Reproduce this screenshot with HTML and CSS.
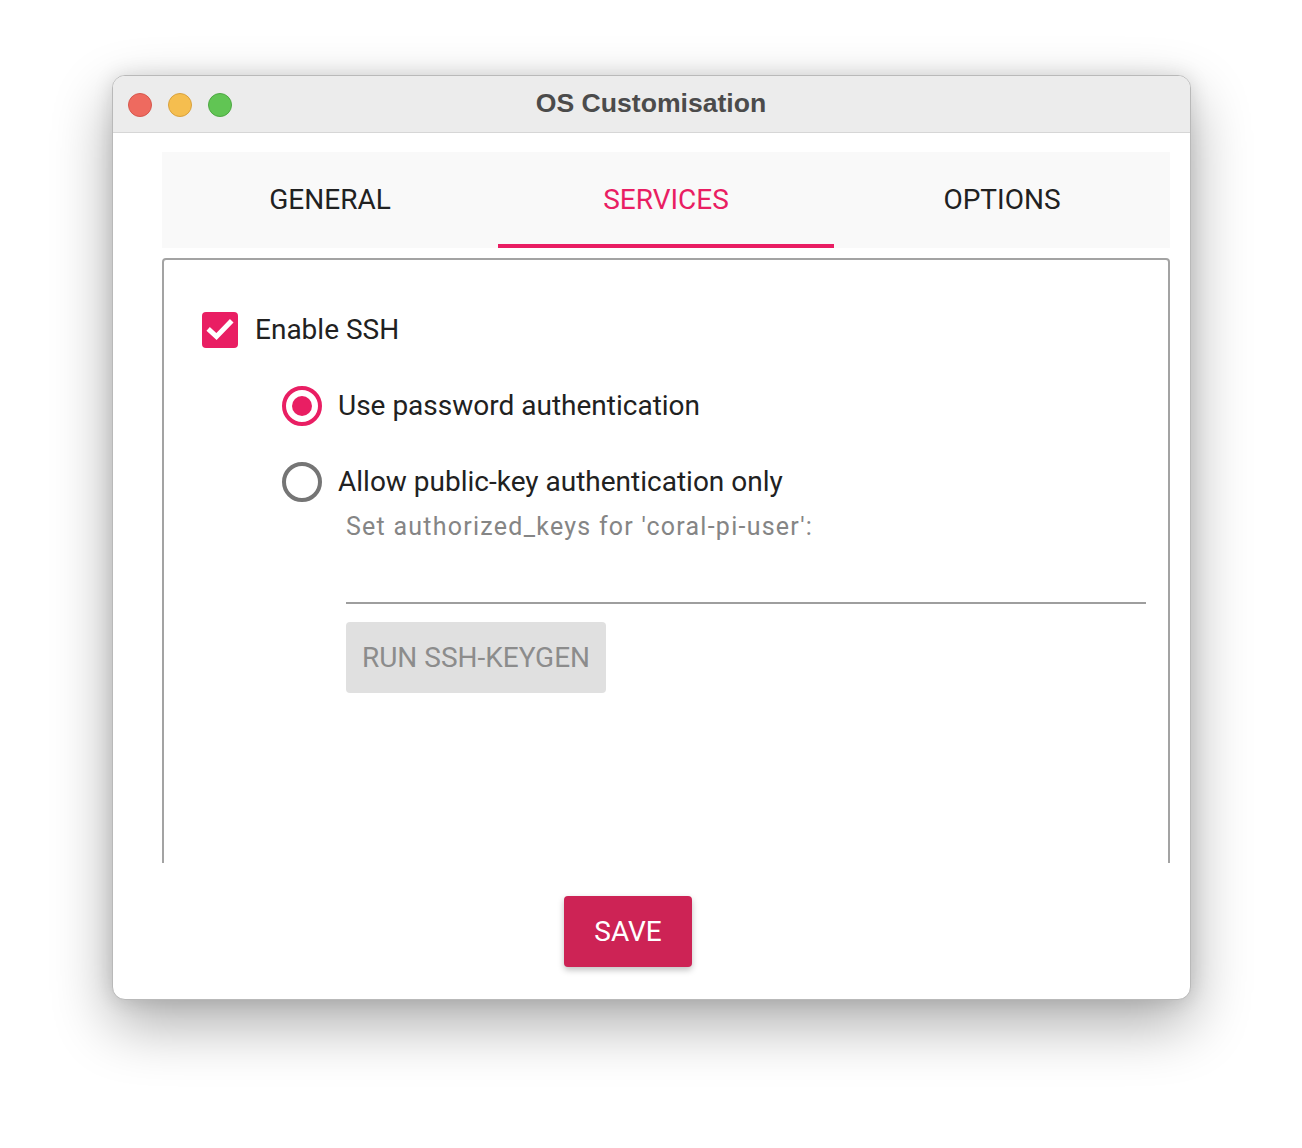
FILE: index.html
```html
<!DOCTYPE html>
<html>
<head>
<meta charset="utf-8">
<link rel="stylesheet" href="styles.css">
</head>
<body>
<div class="stage">
  <div class="window">
    <div class="titlebar">
      <div class="lights">
        <span class="light red"></span>
        <span class="light yellow"></span>
        <span class="light green"></span>
      </div>
      <div class="title">OS Customisation</div>
    </div>
    <div class="content">
      <div class="tabs">
        <div class="tab">GENERAL</div>
        <div class="tab active">SERVICES</div>
        <div class="tab">OPTIONS</div>
      </div>
      <div class="frame-clip">
        <div class="frame">
          <div class="check-row">
            <span class="checkbox">
              <svg width="36" height="36" viewBox="0 0 36 36"><path d="M8 18.5 L14.5 24.5 L28 10.5" fill="none" stroke="#fff" stroke-width="5" stroke-linecap="square"/></svg>
            </span>
            <span class="label">Enable SSH</span>
          </div>
          <div class="radios">
            <div class="radio-row first">
              <span class="radio checked"><span class="dot"></span></span>
              <span class="label">Use password authentication</span>
            </div>
            <div class="radio-row second">
              <span class="radio"></span>
              <span class="label">Allow public-key authentication only</span>
            </div>
            <div class="keys">
              <div class="hint">Set authorized_keys for 'coral-pi-user':</div>
              <div class="field"></div>
              <div class="keygen">RUN SSH-KEYGEN</div>
            </div>
          </div>
        </div>
      </div>
      <div class="actions">
        <div class="save">SAVE</div>
      </div>
    </div>
  </div>
</div>
</body>
</html>
```

FILE: styles.css
```css
html, body {
  margin: 0;
  padding: 0;
  background: #ffffff;
}

.stage {
  width: 1302px;
  height: 1148px;
  padding: 75px 0 0 112px;
  box-sizing: border-box;
}

.window {
  width: 1079px;
  height: 925px;
  box-sizing: border-box;
  background: #ffffff;
  border: 1px solid #b9b9b9;
  border-radius: 13px;
  overflow: hidden;
  box-shadow: 0 24px 60px rgba(0, 0, 0, 0.33), 0 0 20px rgba(0, 0, 0, 0.12);
  display: flex;
  flex-direction: column;
}

.titlebar {
  height: 56px;
  flex: none;
  background: #ececec;
  border-bottom: 1px solid #d6d6d6;
  display: flex;
  align-items: center;
  position: relative;
}

.lights {
  display: flex;
  gap: 16px;
  padding-left: 15px;
  padding-top: 2px;
}

.light {
  width: 24px;
  height: 24px;
  border-radius: 50%;
  box-sizing: border-box;
}

.light.red { background: #ee6a5f; border: 1px solid #d6574d; }
.light.yellow { background: #f5be4f; border: 1px solid #d9a23e; }
.light.green { background: #61c554; border: 1px solid #4ea843; }

.title {
  position: absolute;
  left: 0;
  right: 0;
  top: 0;
  bottom: 0;
  display: flex;
  align-items: center;
  justify-content: center;
  font-family: "Liberation Sans", Arial, sans-serif;
  font-weight: bold;
  font-size: 26.6px;
  color: #4b4b4b;
  padding-bottom: 1px;
  padding-right: 1px;
}

.content {
  flex: 1;
  padding: 19px 20px 0 49px;
  font-family: Roboto, "Noto Sans", sans-serif;
}

.tabs {
  height: 96px;
  background: #f9f9f9;
  display: grid;
  grid-template-columns: 1fr 1fr 1fr;
}

.tab {
  display: flex;
  align-items: center;
  justify-content: center;
  font-size: 28px;
  color: #212121;
  box-sizing: border-box;
  padding-bottom: 2px;
}

.tab.active {
  color: #e91e63;
  border-bottom: 4px solid #e91e63;
  padding-top: 2px;
  padding-bottom: 0;
}

.frame-clip {
  margin-top: 10px;
  height: 605px;
  overflow: hidden;
}

.frame {
  height: 700px;
  box-sizing: border-box;
  border: 2px solid #a3a3a3;
  border-radius: 4px;
  padding: 52px 22px 0 38px;
}

.check-row {
  display: flex;
  align-items: center;
  height: 36px;
}

.checkbox {
  width: 36px;
  height: 36px;
  border-radius: 4px;
  background: #e91e63;
  flex: none;
  display: block;
}

.checkbox svg {
  display: block;
}

.label {
  font-size: 28px;
  color: #212121;
  white-space: nowrap;
}

.check-row .label {
  margin-left: 17px;
  padding-bottom: 2px;
}

.radios {
  margin-left: 80px;
}

.radio-row {
  display: flex;
  align-items: center;
  height: 40px;
}

.radio-row.first { margin-top: 38px; }
.radio-row.second { margin-top: 36px; }

.radio {
  width: 40px;
  height: 40px;
  box-sizing: border-box;
  border: 4px solid #757575;
  border-radius: 50%;
  flex: none;
  display: flex;
  align-items: center;
  justify-content: center;
}

.radio.checked {
  border-color: #e91e63;
}

.dot {
  width: 20px;
  height: 20px;
  border-radius: 50%;
  background: #e91e63;
}

.radio-row .label {
  margin-left: 16px;
  padding-bottom: 1px;
}

.keys {
  margin-left: 64px;
}

.hint {
  margin-top: 10px;
  height: 30px;
  line-height: 30px;
  font-size: 25px;
  letter-spacing: 1.25px;
  color: #858585;
  white-space: nowrap;
}

.field {
  height: 62px;
  box-sizing: border-box;
  border-bottom: 2px solid #9e9e9e;
}

.keygen {
  margin-top: 18px;
  width: 260px;
  height: 71px;
  box-sizing: border-box;
  background: #e0e0e0;
  border-radius: 4px;
  display: flex;
  align-items: center;
  justify-content: center;
  font-size: 28px;
  color: #8c8c8c;
}

.actions {
  padding-top: 33px;
  padding-left: 402px;
}

.save {
  width: 128px;
  height: 71px;
  background: #cd2355;
  border-radius: 4px;
  color: #ffffff;
  font-size: 28px;
  display: flex;
  align-items: center;
  justify-content: center;
  box-shadow: 0 3px 6px rgba(0, 0, 0, 0.25);
}
```
